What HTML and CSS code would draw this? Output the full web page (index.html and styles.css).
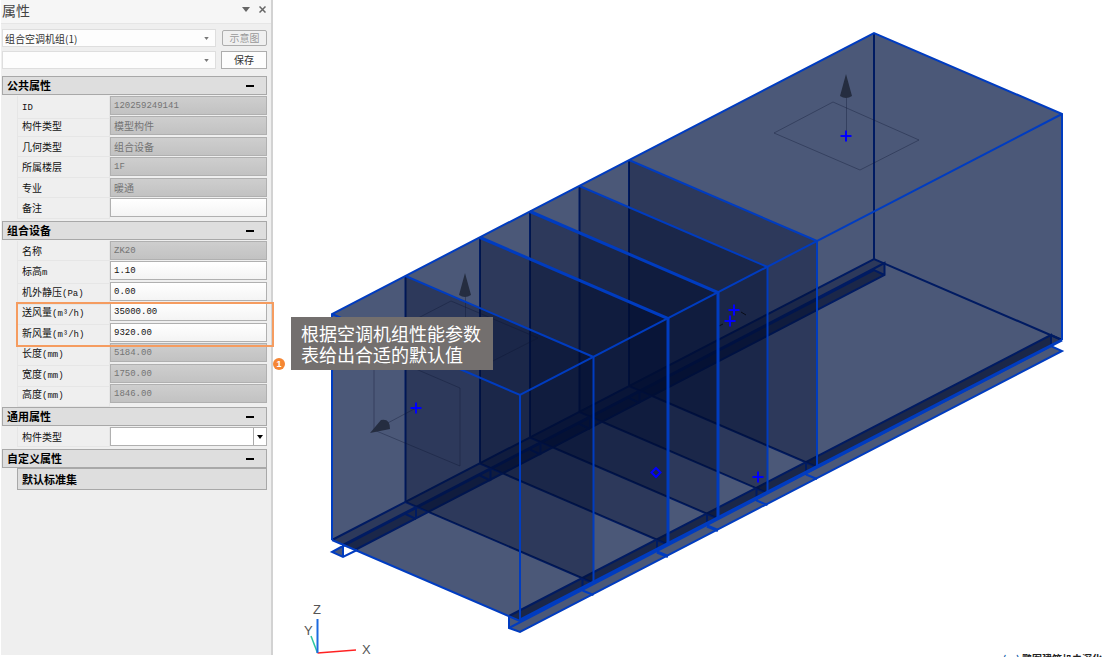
FILE: index.html
```html
<!DOCTYPE html>
<html lang="zh-CN">
<head>
<meta charset="utf-8">
<title>属性</title>
<link rel="stylesheet" href="styles.css">
</head>
<body>
<main class="app">
  <aside class="panel">
    <header class="titlebar">
      <h1 class="title">属性</h1>
      <button class="icon-btn" type="button" aria-label="选项"><svg width="8" height="5" viewBox="0 0 8 5"><path d="M0 0h8L4 5z" fill="#666"/></svg></button>
      <button class="icon-btn" type="button" aria-label="关闭"><svg width="7" height="7" viewBox="0 0 7 7"><path d="M.5 .5l6 6M6.500 .5l-6 6" stroke="#666" stroke-width="1.500"/></svg></button>
    </header>
    <div class="toolbar">
      <select class="combo" aria-label="构件"><option>组合空调机组(1)</option></select>
      <button class="btn btn-off" type="button" disabled>示意图</button>
      <select class="combo" aria-label="方案"><option></option></select>
      <button class="btn" type="button">保存</button>
    </div>

    <section class="group">
      <h2 class="head"><button type="button">公共属性<span class="minus"></span></button></h2>
      <div class="rows">
        <div class="row"><label for="f1"><span class="unit">ID</span></label><input id="f1" class="num" value="120259249141" disabled></div>
        <div class="row"><label for="f2">构件类型</label><input id="f2" value="模型构件" disabled></div>
        <div class="row"><label for="f3">几何类型</label><input id="f3" value="组合设备" disabled></div>
        <div class="row"><label for="f4">所属楼层</label><input id="f4" class="num" value="1F" disabled></div>
        <div class="row"><label for="f5">专业</label><input id="f5" value="暖通" disabled></div>
        <div class="row"><label for="f6">备注</label><input id="f6" value=""></div>
      </div>
    </section>

    <section class="group">
      <h2 class="head"><button type="button">组合设备<span class="minus"></span></button></h2>
      <div class="rows">
        <div class="row"><label for="g1">名称</label><input id="g1" class="num" value="ZK20" disabled></div>
        <div class="row"><label for="g2">标高<span class="unit">m</span></label><input id="g2" class="num" value="1.10"></div>
        <div class="row"><label for="g3">机外静压<span class="unit">(Pa)</span></label><input id="g3" class="num" value="0.00"></div>
        <div class="row marked"><label for="g4">送风量<span class="unit">(m³/h)</span></label><input id="g4" class="num" value="35000.00"><span class="mark"><b class="badge">1</b></span></div>
        <div class="row"><label for="g5">新风量<span class="unit">(m³/h)</span></label><input id="g5" class="num" value="9320.00"></div>
        <div class="row"><label for="g6">长度<span class="unit">(mm)</span></label><input id="g6" class="num" value="5184.00" disabled></div>
        <div class="row"><label for="g7">宽度<span class="unit">(mm)</span></label><input id="g7" class="num" value="1750.00" disabled></div>
        <div class="row"><label for="g8">高度<span class="unit">(mm)</span></label><input id="g8" class="num" value="1846.00" disabled></div>
      </div>
    </section>

    <section class="group">
      <h2 class="head"><button type="button">通用属性<span class="minus"></span></button></h2>
      <div class="rows">
        <div class="row"><label for="h1">构件类型</label><select id="h1" class="drop"><option></option></select></div>
      </div>
    </section>

    <section class="group">
      <h2 class="head"><button type="button">自定义属性<span class="minus"></span></button></h2>
      <h3 class="subhead">默认标准集</h3>
    </section>
  </aside>

  <section class="view">
    <svg class="scene" viewBox="273 0 829 657" preserveAspectRatio="xMinYMin meet" role="img" aria-label="组合空调机组三维模型">
      <defs>
        <path id="wall" d="M0 0L188 81V307L0 226Z"/>
        <path id="hidden-wall" d="M0 0V226L188 307M10.500 230.500V243M10.500 243L0 238M177 302.500V314.500M177 302.500L188 307"/>
        <path id="seen-wall" d="M0 0L188 81V307M177 314.500L188 319"/>
        <path id="cone" d="M0 0L-6 22Q0 26 6 22Z" fill="#252d40"/>
        <path id="plus" d="M-5.500 0H5.500M0 -5.500V5.500" fill="none" stroke="#00f" stroke-width="2"/>
      </defs>

      <g fill="#4b5878">
        <path d="M332 314L874 33L1062 114V340L520 621L332 540Z"/>
        <path d="M332 552L343 546V557Z"/>
        <path d="M509 616L520 621L1051 346L1062 351L520 632L509 628Z"/>
      </g>

      <g fill="#000c30" fill-opacity=".4">
        <path d="M332 540L874 259L884.500 263L343 545Z"/>
        <path d="M343 545L884.500 263V275L355 550Z"/>
        <path d="M343 546L874 270L884.500 275L355 550Z"/>
        <path d="M509 616L1051 335L1062 340L520 621Z"/>
        <path d="M509 616L1051 335V345L520 621Z"/>
      </g>

      <g fill="none" stroke="#001b62" stroke-width="2">
        <path d="M874 33V259M332 540L874 259L1062 340"/>
        <path d="M343 545L884.500 263V275L355 550M343 546L874 270L884.500 275"/>
        <path d="M509 616L1051 335V346M1051 335L1062 340"/>
        <use href="#hidden-wall" x="405.500" y="276"/>
        <use href="#hidden-wall" x="480" y="237.500"/>
        <use href="#hidden-wall" x="530" y="211.500"/>
        <use href="#hidden-wall" x="579.500" y="186"/>
        <use href="#hidden-wall" x="629" y="160"/>
      </g>

      <g fill="#000c30" fill-opacity=".4">
        <use href="#wall" x="405.500" y="276"/>
        <use href="#wall" x="480" y="237.500"/>
        <use href="#wall" x="530" y="211.500"/>
        <use href="#wall" x="579.500" y="186"/>
        <use href="#wall" x="629" y="160"/>
      </g>

      <g fill="none" stroke="#0b1430" stroke-opacity=".35">
        <path d="M833 102L919 140L860 170L774 133ZM846.500 97V132"/>
        <path d="M451 301L538 338L479 368L393 331ZM465.500 296V330"/>
        <path d="M374 351L460 388V466L374 430ZM416 408L384 425"/>
      </g>
      <path d="M719 326L723 324M741 312L746 315" stroke="#080c18" stroke-width="1"/>
      <use href="#cone" x="846" y="74"/>
      <use href="#cone" x="465" y="273"/>
      <path d="M370 433L381 420Q390 418 390 429Z" fill="#252d40"/>

      <g fill="none" stroke="#003cc0" stroke-width="2">
        <path d="M332 540V314L874 33L1062 114V340M332 314L520 395L1062 114"/>
        <path d="M520 395V621M332 540L520 621"/>
        <path d="M520 620L1062 340" stroke-width="3"/>
        <path d="M343 546L332 552L343 557L357 550M343 545V557"/>
        <path d="M509 616V628L520 632L1062 351L1051 346L509 628"/>
        <use href="#seen-wall" x="405.500" y="276"/>
        <use href="#seen-wall" x="480" y="237.500" stroke-width="3"/>
        <use href="#seen-wall" x="530" y="211.500" stroke-width="3"/>
        <use href="#seen-wall" x="579.500" y="186"/>
        <use href="#seen-wall" x="629" y="160"/>
      </g>

      <use href="#plus" x="846" y="136"/>
      <use href="#plus" x="416" y="408"/>
      <use href="#plus" x="734" y="310"/>
      <use href="#plus" x="730" y="321"/>
      <use href="#plus" x="758" y="477"/>
      <path d="M656 468L660.500 472.500L656 477L651.500 472.500Z" fill="none" stroke="#00f" stroke-width="2"/>

      <g fill="none" stroke-width="1.500">
        <path d="M317.500 653L311 636" stroke="#2cc5a0"/>
        <path d="M317.500 653L356 650" stroke="#f22"/>
        <path d="M317.500 653V619" stroke="#1c6be0" stroke-width="2"/>
      </g>
      <g fill="none" stroke="#666" stroke-width="1.500" aria-hidden="true"></g>
      <g class="axis">
        <text x="313" y="614">Z</text>
        <text x="304" y="635">Y</text>
        <text x="362" y="654">X</text>
      </g>
    </svg>
    <p class="callout">根据空调机组性能参数<br>表给出合适的默认值</p>
    <p class="credit"><span class="credit-logo">(m)</span> 鹏图建筑机电深化</p>
  </section>
</main>
</body>
</html>
```
FILE: styles.css
```css
* { box-sizing: border-box; }

body {
  margin: 0;
  background: #fff;
  color: #111;
  font-family: "Noto Sans CJK SC", sans-serif;
  font-size: 10px;
}

button, input, select { font: inherit; color: inherit; margin: 0; border-radius: 0; }
h1, h2, h3, p { margin: 0; }

.app {
  display: flex;
  height: 100vh;
  overflow: hidden;
}

.panel {
  flex: 0 0 273px;
  margin-bottom: 2px;
  padding-right: 4px;
  border-left: 1px solid #fff;
  border-right: 2px solid #d2d2d2;
  background: #efefef;
}

.titlebar {
  display: flex;
  align-items: center;
  gap: 9px;
  height: 24px;
  margin-right: -4px;
  padding: 0 5px 4px 1px;
  background: #f6f6f6;
  border-bottom: 1px solid #e6e6e6;
}

.title {
  flex: 1;
  color: #444;
  font-size: 14px;
  font-weight: 400;
  line-height: 18px;
}

.icon-btn {
  display: flex;
  padding: 0;
  border: 0;
  background: none;
}

.toolbar {
  display: grid;
  grid-template-columns: 1fr 46px;
  gap: 4px 5px;
  padding: 5px 0 7px 1px;
}

.combo {
  appearance: none;
  height: 18px;
  padding: 0 2px;
  border: 1px solid #dedede;
  color: #333;
  background: url("data:image/svg+xml,%3Csvg xmlns='http://www.w3.org/2000/svg' viewBox='0 0 6 4'%3E%3Cpath d='M0 0h6L3 4z' fill='%23777'/%3E%3C/svg%3E") no-repeat right 6px center / 5px 3px #fdfdfd;
}

.btn {
  height: 18px;
  padding: 0;
  border: 1px solid #adadad;
  background: #fdfdfd;
  color: #333;
  line-height: 16px;
}

.btn-off {
  margin-left: 1px;
  height: 16px;
  align-self: center;
  border-radius: 2px;
  background: #f0f0f0;
  color: #999;
  line-height: 14px;
}

.group { margin: 0 0 2px 1px; }

.head { font-size: 11px; line-height: 17px; }

.head button {
  display: flex;
  align-items: center;
  justify-content: space-between;
  width: 100%;
  height: 19px;
  padding: 0 12px 0 4px;
  border: 1px solid #a8a8a8;
  background: #dedede;
  color: #000;
  font-weight: 700;
}

.minus { width: 8px; height: 2px; background: #000; }

.rows { padding: 1px 0 0 15px; }

.row {
  display: grid;
  grid-template-columns: 93px 1fr;
  height: 20px;
}

.row:nth-child(even) { height: 21px; }

.row label {
  padding-left: 4px;
  border: 1px solid #e6e6e6;
  border-width: 0 1px 1px 1px;
  line-height: 19px;
  white-space: nowrap;
}

.unit, .row .num {
  font-family: "Liberation Mono", monospace;
  font-size: 9px;
}

.row input {
  width: 100%;
  min-width: 0;
  height: 19px;
  padding: 0 3px;
  border: 1px solid #b0b0b0;
  outline: 0;
  background: linear-gradient(#fff, #f4f4f4);
}

.row input:disabled {
  background: linear-gradient(#cecece, #c2c2c2);
  color: #747474;
}

.drop {
  appearance: none;
  width: 100%;
  height: 19px;
  border: 1px solid #b0b0b0;
  background:
    url("data:image/svg+xml,%3Csvg xmlns='http://www.w3.org/2000/svg' viewBox='0 0 6 4'%3E%3Cpath d='M0 0h6L3 4z'/%3E%3C/svg%3E") no-repeat right 3px center / 6px 4px,
    linear-gradient(#aaa, #aaa) no-repeat right 12px center / 1px 100%,
    #fff;
}

.subhead {
  margin-left: 15px;
  padding-left: 4px;
  height: 22px;
  border: 1px solid #a8a8a8;
  background: #dedede;
  color: #000;
  font-size: 11px;
  line-height: 20px;
}

.marked { position: relative; }

.mark {
  position: absolute;
  z-index: 1;
  inset: 0 -7px auto -1px;
  height: 45px;
  border: 2px solid #f59c60;
  pointer-events: none;
}

.badge {
  position: absolute;
  right: -13px;
  bottom: -25px;
  width: 12px;
  height: 12px;
  border-radius: 50%;
  background: #f58634;
  color: #fff;
  font: 700 9px/12px "Liberation Sans", sans-serif;
  text-align: center;
}

.view {
  position: relative;
  flex: 1;
  min-width: 0;
  overflow: hidden;
}

.scene { display: block; width: 100%; }

.axis {
  fill: #555;
  font: 13px "Liberation Sans", sans-serif;
}

.callout {
  position: absolute;
  left: 18px;
  top: 317px;
  padding: 6px 12px 5px 10px;
  background: #736f6e;
  color: #fff;
  font: 18px/21px "Noto Sans CJK SC", sans-serif;
  white-space: nowrap;
}

.credit {
  position: absolute;
  right: 0;
  bottom: -9px;
  color: #222;
  font: 700 10px/14px "Noto Sans CJK SC", sans-serif;
  white-space: nowrap;
}

.credit-logo { color: #0a5aa8; }
```
